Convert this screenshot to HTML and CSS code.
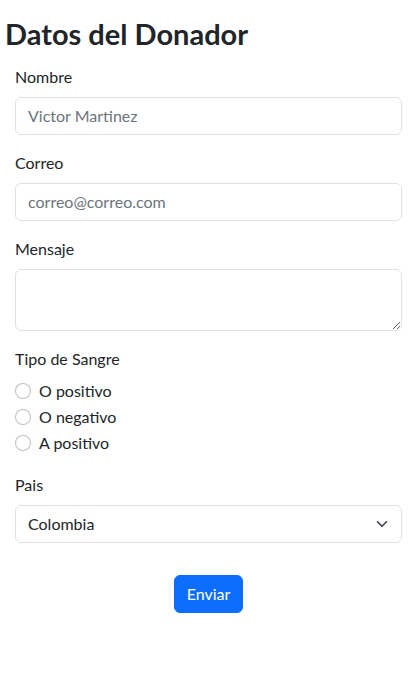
FILE: index.html
```html
<!DOCTYPE html>
<html lang="es">
<head>
<meta charset="utf-8">
<title>Datos del Donador</title>
<link rel="stylesheet" href="styles.css">
</head>
<body>
<h1 class="title">Datos del Donador</h1>
<form class="form">
  <div class="field">
    <label class="label" for="nombre">Nombre</label>
    <input class="control" id="nombre" type="text" placeholder="Victor Martinez">
  </div>
  <div class="field">
    <label class="label" for="correo">Correo</label>
    <input class="control" id="correo" type="email" placeholder="correo@correo.com">
  </div>
  <div class="field">
    <label class="label" for="mensaje">Mensaje</label>
    <textarea class="control textarea" id="mensaje" rows="2"></textarea>
  </div>
  <div class="field checks">
    <div class="label">Tipo de Sangre</div>
    <label class="check"><input class="radio" type="radio" name="sangre"><span>O positivo</span></label>
    <label class="check"><input class="radio" type="radio" name="sangre"><span>O negativo</span></label>
    <label class="check"><input class="radio" type="radio" name="sangre"><span>A positivo</span></label>
  </div>
  <div class="field">
    <label class="label" for="pais">Pais</label>
    <div class="select-wrap">
      <select class="control select" id="pais">
        <option>Colombia</option>
      </select>
      <svg class="chevron" width="16" height="12" viewBox="0 0 16 16"><path fill="none" stroke="#343a40" stroke-linecap="round" stroke-linejoin="round" stroke-width="2" d="m2 5 6 6 6-6"/></svg>
    </div>
  </div>
  <div class="actions">
    <button class="btn" type="button">Enviar</button>
  </div>
</form>
</body>
</html>
```
FILE: styles.css
```css
* { box-sizing: border-box; }
body {
  margin: 0;
  font-family: Lato, "Noto Sans", sans-serif;
  font-size: 16px;
  line-height: 1.5;
  color: #212529;
  background: #fff;
}
.title {
  margin: 17px 0 13px 5px;
  font-size: 29px;
  font-weight: 700;
  line-height: 1.2;
}
.form {
  padding: 0 17px 0 15px;
}
.field {
  margin-bottom: 16px;
}
.checks {
  display: flow-root;
}
.label {
  display: block;
  margin-bottom: 8px;
}
.control {
  display: block;
  width: 100%;
  height: 38px;
  padding: 6px 12px;
  font-family: inherit;
  font-size: 16px;
  line-height: 1.5;
  color: #212529;
  background: #fff;
  border: 1px solid #dee2e6;
  border-radius: 6px;
  outline: none;
}
.control::placeholder { color: #6c757d; }
.textarea {
  height: 62px;
  resize: vertical;
}
.check {
  display: flex;
  align-items: center;
  gap: 8px;
  min-height: 24px;
  margin-bottom: 2px;
}
.radio {
  appearance: none;
  width: 16px;
  height: 16px;
  margin: 0;
  border: 1px solid rgba(0,0,0,.25);
  border-radius: 50%;
  background: #fff;
}
.select-wrap { position: relative; }
.select {
  appearance: none;
  padding-right: 36px;
}
.chevron {
  position: absolute;
  right: 12px;
  top: 13px;
  pointer-events: none;
}
.actions {
  display: flex;
  justify-content: center;
  padding-top: 16px;
}
.btn {
  height: 38px;
  padding: 6px 12px;
  font-family: inherit;
  font-size: 16px;
  line-height: 1.5;
  color: #fff;
  background: #0d6efd;
  border: 1px solid #0d6efd;
  border-radius: 6px;
}
```
